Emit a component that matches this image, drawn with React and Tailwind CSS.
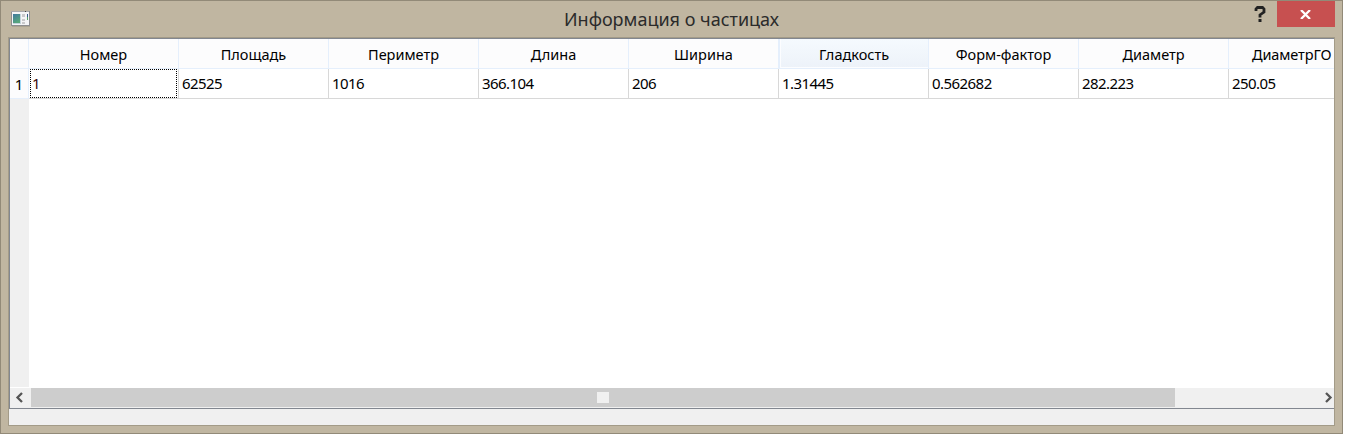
const columns = [
  { title: 'Номер', value: '1' },
  { title: 'Площадь', value: '62525' },
  { title: 'Периметр', value: '1016' },
  { title: 'Длина', value: '366.104' },
  { title: 'Ширина', value: '206' },
  { title: 'Гладкость', value: '1.31445', hover: true },
  { title: 'Форм-фактор', value: '0.562682' },
  { title: 'Диаметр', value: '282.223' },
  { title: 'ДиаметрГО', value: '250.05', clipped: true },
];

function AppIcon() {
  return (
    <svg className="mt-[10px] ml-[9px] h-4 w-5 shrink-0" viewBox="0 0 20 16" shapeRendering="crispEdges">
      <defs>
        <linearGradient id="screen" x1="0" y1="0" x2="0.5" y2="1">
          <stop offset="0" stopColor="#3f78a0" />
          <stop offset="1" stopColor="#57a67c" />
        </linearGradient>
      </defs>
      <rect x="1" y="0" width="19" height="15" fill="#8e8e90" />
      <rect x="2" y="1" width="17" height="13" fill="#f4f4f6" />
      <rect x="1" y="0" width="18" height="1" fill="#a9a9ac" />
      <rect x="15" y="0" width="1" height="1" fill="#444" />
      <rect x="3" y="3" width="8" height="10" fill="#c3d3da" />
      <rect x="3" y="3" width="7" height="9" fill="url(#screen)" />
      <rect x="12" y="3" width="3" height="3" fill="#c9c9cb" />
      <rect x="12" y="8" width="3" height="2" fill="#c9c9cb" />
      <rect x="12" y="11" width="3" height="2" fill="#c9c9cb" />
      <rect x="17" y="3" width="1" height="3" fill="#35588c" />
      <rect x="17" y="6" width="1" height="3" fill="#58a368" />
      <rect x="2" y="15" width="18" height="1" fill="#aaa28f" />
    </svg>
  );
}

function TitleBar() {
  return (
    <header className="flex h-9 shrink-0">
      <AppIcon />
      <h1 className="ml-[534px] w-[214px] pt-[4px] text-center text-[18px] leading-7 whitespace-nowrap text-[#2b2b2b]">
        Информация о частицах
      </h1>
      <svg className="mt-[5px] ml-[476px] h-4 w-3 shrink-0" viewBox="0 0 12 16" fill="none" stroke="#222">
        <path d="M2 5V3L3.5 1.5H8.5L10 3V6L8 7.5L6 9V11.5" strokeWidth="2.8" />
        <path d="M6 13V16" strokeWidth="3" />
      </svg>
      <button className="ml-[11px] flex h-[26px] w-[58px] shrink-0 items-center justify-center bg-[#c75050]">
        <svg className="mr-px h-[9px] w-[11px]" viewBox="0 0 11 9" stroke="#fff" strokeWidth="2.3">
          <path d="M1 0L10 9M10 0L1 9" />
        </svg>
      </button>
    </header>
  );
}

function Table() {
  return (
    <div className="flex h-[349px] bg-white">
      <div className="flex w-[19px] shrink-0 flex-col bg-[#f0f0f0]">
        <div className="h-[30px] border-r border-b border-[#e5effc] bg-[#fcfcfd]" />
        <div className="h-[30px] border-r border-b border-[#e5effc] bg-[#fcfcfd] text-center text-[15px] leading-[31px]">1</div>
        <div className="grow" />
        <div className="h-px bg-white" />
      </div>
      <div className="grow overflow-hidden">
        <div className="flex w-[1350px]">
          {columns.map((c, i) => (
            <div key={c.title} className="w-[150px] shrink-0">
              <div
                className={
                  'flex h-[30px] border-r border-b border-[#e5effc] text-[14.5px] leading-[31px] ' +
                  (c.clipped ? 'justify-start pl-[23px] tracking-[-0.1px] ' : 'justify-center ') +
                  (c.hover ? 'bg-linear-to-b from-[#f5fafe] to-[#edf2f9] pl-px shadow-[inset_1px_0_#e5effc,inset_2px_-1px_#fcfdff]' : 'bg-[#fcfcfd]')
                }
              >
                <span>{c.title}</span>
              </div>
              <div className="h-[30px] border-r border-b border-[#d8d8d8]">
                <div
                  className={
                    'h-[29px] text-[15px] tracking-[-0.55px] ' +
                    (i === 0 ? 'ml-px w-[147px] border border-dotted border-black pl-[1px] leading-[27px] text-[#3a0808]' : 'pl-[3px] leading-[29px]')
                  }
                >
                  {c.value}
                </div>
              </div>
            </div>
          ))}
        </div>
      </div>
    </div>
  );
}

function ScrollBar() {
  return (
    <div className="flex h-5 bg-[#f0f0f0]">
      <svg className="h-[19px] w-[21px] shrink-0" viewBox="0 0 21 19" fill="none" stroke="#555" strokeWidth="2.3">
        <path d="M12 5L7.5 9.5L12 14" />
      </svg>
      <div className="h-[19px] w-[1144px] bg-[#cdcdcd]">
        <div className="mt-1 ml-[566px] h-[11px] w-3 bg-[#f0f0f0]" />
      </div>
      <svg className="ml-auto h-[19px] w-[12px] shrink-0" viewBox="0 0 12 19" fill="none" stroke="#555" strokeWidth="2.3">
        <path d="M4 5L8.5 9.5L4 14" />
      </svg>
    </div>
  );
}

export default function App() {
  return (
    <div className="h-[436px] w-[1346px] overflow-hidden bg-white font-['Noto_Sans',sans-serif] text-black">
      <div className="flex h-[434px] w-[1343px] flex-col border border-[#928a78] bg-[#c0b6a1]">
        <TitleBar />
        <main className="ml-[7px] h-[389px] w-[1327px] border border-[#a39b88] bg-[#f0f0f0]">
          <div className="h-[371px] border-t border-b border-l border-[#828790]">
            <Table />
            <ScrollBar />
          </div>
        </main>
      </div>
    </div>
  );
}
